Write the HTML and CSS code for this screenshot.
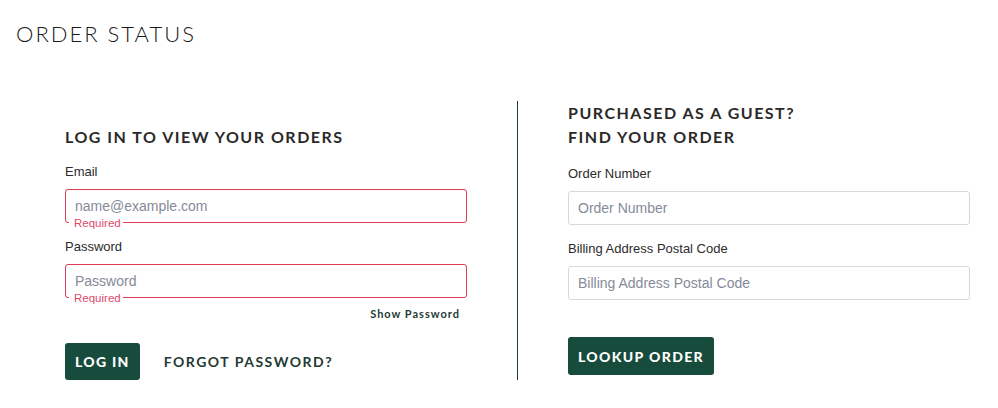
FILE: index.html
```html
<!DOCTYPE html>
<html lang="en">
<head>
<meta charset="utf-8">
<title>Order Status</title>
<link rel="stylesheet" href="styles.css">
</head>
<body>
<main class="page">
  <h1 class="title">ORDER STATUS</h1>
  <div class="columns">
    <section class="col col-login">
      <h2 class="heading">LOG IN TO VIEW YOUR ORDERS</h2>
      <div class="field">
        <label class="label" for="email">Email</label>
        <div class="input-wrap is-error">
          <input class="input" id="email" type="email" placeholder="name@example.com">
          <span class="req">Required</span>
        </div>
      </div>
      <div class="field">
        <label class="label" for="password">Password</label>
        <div class="input-wrap is-error">
          <input class="input" id="password" type="password" placeholder="Password">
          <span class="req">Required</span>
        </div>
      </div>
      <div class="show-row"><a class="show-pass" href="#">Show Password</a></div>
      <div class="actions">
        <button class="btn" type="button">LOG IN</button>
        <a class="forgot" href="#">FORGOT PASSWORD?</a>
      </div>
    </section>
    <div class="divider"></div>
    <section class="col col-guest">
      <h2 class="heading">PURCHASED AS A GUEST?<br>FIND YOUR ORDER</h2>
      <div class="field">
        <label class="label" for="order">Order Number</label>
        <div class="input-wrap">
          <input class="input" id="order" type="text" placeholder="Order Number">
        </div>
      </div>
      <div class="field">
        <label class="label" for="zip">Billing Address Postal Code</label>
        <div class="input-wrap">
          <input class="input" id="zip" type="text" placeholder="Billing Address Postal Code">
        </div>
      </div>
      <div class="actions actions-guest">
        <button class="btn btn-lookup" type="button">LOOKUP ORDER</button>
      </div>
    </section>
  </div>
</main>
</body>
</html>
```

FILE: styles.css
```css
* { box-sizing: border-box; }

body {
  margin: 0;
  background: #fff;
  color: #2a2a2a;
  font-family: "Liberation Sans", Arial, sans-serif;
}

.page {
  padding: 19px 0 0 16px;
}

.title {
  margin: 0;
  font-family: Lato, "Open Sans", sans-serif;
  font-weight: 300;
  font-size: 22px;
  line-height: 30px;
  letter-spacing: 2px;
  color: #1a1a1a;
}

.columns {
  display: flex;
  align-items: stretch;
  margin-top: 52px;
  padding-left: 49px;
}

.col {
  width: 402px;
  display: flex;
  flex-direction: column;
}

.col-login {
  padding-top: 24px;
}

.divider {
  width: 1px;
  background: #173f35;
  margin: 0 50px 0 50px;
}

.heading {
  margin: 0;
  font-family: Lato, "Open Sans", sans-serif;
  font-weight: 700;
  font-size: 16px;
  line-height: 24px;
  letter-spacing: 1.5px;
  color: #2b2a28;
}

.field {
  display: flex;
  flex-direction: column;
}

.label {
  font-size: 13px;
  line-height: 16px;
  color: #2b2b2b;
  margin-top: 16px;
  margin-bottom: 9px;
}

.col-login .heading + .field .label {
  margin-top: 15px;
}

.col-guest .heading + .field .label {
  margin-top: 17px;
}

.input-wrap {
  position: relative;
}

.input {
  display: block;
  width: 100%;
  height: 34px;
  padding: 0 9px;
  border: 1px solid #d6d9de;
  border-radius: 3px;
  font-family: "Liberation Sans", Arial, sans-serif;
  font-size: 14px;
  color: #333;
  outline: none;
  background: #fff;
}

.input::placeholder {
  color: #858b99;
}

.is-error .input {
  border-color: #dc3d52;
}

.req {
  position: absolute;
  left: 4px;
  bottom: -6px;
  padding: 0 2px 0 5px;
  background: #fff;
  font-size: 11.5px;
  line-height: 12px;
  color: #e0496b;
}

.show-row {
  display: flex;
  justify-content: flex-end;
  padding-right: 7px;
  margin-top: 9px;
}

.show-pass {
  font-family: Lato, "Open Sans", sans-serif;
  font-weight: 700;
  font-size: 11px;
  line-height: 14px;
  letter-spacing: 1px;
  color: #1f3a36;
  text-decoration: none;
}

.actions {
  display: flex;
  align-items: center;
  gap: 24px;
  margin-top: 22px;
}

.actions-guest {
  margin-top: 37px;
}

.btn {
  height: 37px;
  padding: 0 10px;
  border: none;
  border-radius: 3px;
  background: #174b3c;
  color: #fff;
  font-family: Lato, "Open Sans", sans-serif;
  font-weight: 900;
  font-size: 14px;
  letter-spacing: 1.3px;
  cursor: pointer;
}

.btn-lookup {
  height: 38px;
  letter-spacing: 1.35px;
}

.forgot {
  font-family: Lato, "Open Sans", sans-serif;
  font-weight: 700;
  font-size: 14px;
  letter-spacing: 1.5px;
  color: #1f3a33;
  text-decoration: none;
}
```
